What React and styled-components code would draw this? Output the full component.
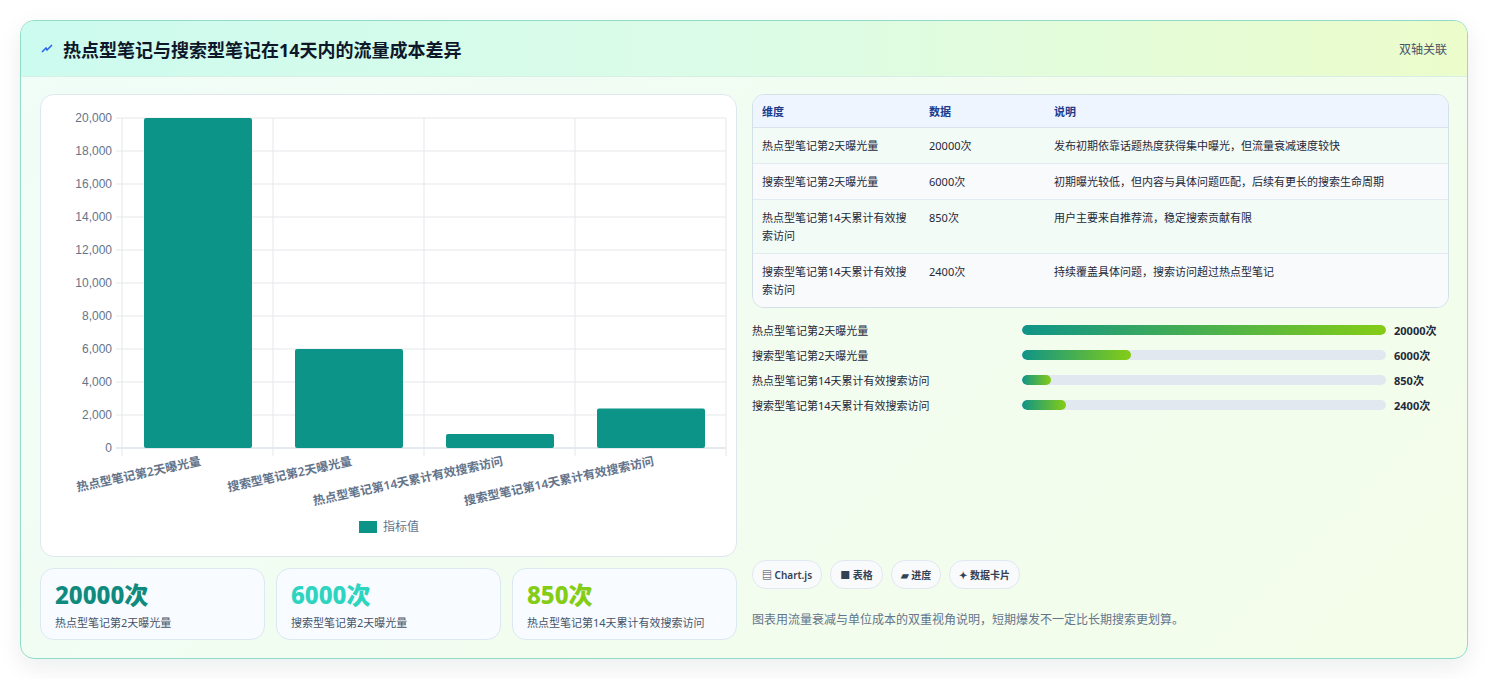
import React from "react";
import styled, { createGlobalStyle } from "styled-components";

const Global = createGlobalStyle`
  body { margin: 0; background: #fff; font-family: "Noto Sans", "Noto Sans CJK SC", sans-serif; }
`;

const Page = styled.div`
  padding: 20px 21px 22px 20px;
`;

const Card = styled.section`
  border: 1px solid #8fdcc8;
  border-radius: 14px;
  background: linear-gradient(135deg, #f0fdf8 0%, #f4fde9 100%);
  box-shadow: 0 8px 24px rgba(15, 23, 42, 0.08);
  overflow: hidden;
`;

const Header = styled.header`
  height: 55px;
  display: flex;
  align-items: center;
  justify-content: space-between;
  padding: 0 20px;
  background: linear-gradient(90deg, #ccfbef 0%, #dcfce7 50%, #ecfccb 100%);
  border-bottom: 1px solid #d9efe6;
`;

const Title = styled.h1`
  margin: 0;
  font-size: 18px;
  font-weight: 700;
  color: #0f172a;
  display: flex;
  align-items: center;
  gap: 10px;
`;

const Tag = styled.span`
  font-size: 12px;
  color: #475569;
`;

const Body = styled.div`
  display: grid;
  grid-template-columns: 697px 697px;
  gap: 15px;
  padding: 17px 18px 18px 19px;
`;

const Col = styled.div`
  display: flex;
  flex-direction: column;
  gap: 11px;
`;

const Panel = styled.div`
  background: #fff;
  border: 1px solid #dfe7ee;
  border-radius: 14px;
  height: 461px;
`;

const Stats = styled.div`
  display: grid;
  grid-template-columns: repeat(3, 1fr);
  gap: 11px;
`;

const Stat = styled.div`
  height: 72px;
  box-sizing: border-box;
  border: 1px solid #dbe9f0;
  border-radius: 14px;
  background: #f8fbff;
  padding: 10px 14px;
`;

const StatValue = styled.div`
  font-size: 24px;
  font-weight: 800;
  line-height: 32px;
  color: ${(p) => p.color};
`;

const StatLabel = styled.div`
  font-size: 11px;
  color: #475569;
  margin-top: 3px;
`;

const Table = styled.table`
  width: 100%;
  border-collapse: separate;
  border-spacing: 0;
  border: 1px solid #d3dfe9;
  border-radius: 12px;
  overflow: hidden;
  font-size: 11px;
  color: #1e293b;
  th {
    text-align: left;
    font-weight: 600;
    color: #1e3a8a;
    background: #eef5ff;
    height: 32px;
    padding: 0 9px;
    border-bottom: 1px solid #d8e3ee;
  }
  td {
    padding: 9px 9px 8px;
    line-height: 18px;
    vertical-align: top;
    border-bottom: 1px solid #e3ebf2;
  }
  tr:nth-child(odd) td { background: #f2fbf6; }
  tr:nth-child(even) td { background: #f8fafc; }
  tr:last-child td { border-bottom: none; }
`;

const Bars = styled.div`
  display: flex;
  flex-direction: column;
  gap: 8px;
  margin-top: 2px;
`;

const BarRow = styled.div`
  display: grid;
  grid-template-columns: 262px 364px 1fr;
  align-items: center;
  gap: 8px;
  font-size: 11px;
  color: #1e293b;
  height: 17px;
  b { font-weight: 700; }
`;

const Track = styled.div`
  height: 10px;
  border-radius: 5px;
  background: #e2e8f0;
  overflow: hidden;
`;

const Fill = styled.div`
  height: 100%;
  border-radius: 5px;
  background: linear-gradient(90deg, #0f9488, #84cc16);
`;

const Spacer = styled.div`
  flex: 1;
`;

const Chips = styled.div`
  display: flex;
  gap: 8px;
`;

const Chip = styled.span`
  font-size: 10px;
  font-weight: 600;
  color: #334155;
  background: #f8fafc;
  border: 1px solid #e2e8f0;
  border-radius: 14px;
  padding: 6px 9px;
`;

const Note = styled.p`
  margin: 10px 0 12px;
  font-size: 12px;
  color: #64748b;
`;

const rows = [
  ["热点型笔记第2天曝光量", 20000, "发布初期依靠话题热度获得集中曝光，但流量衰减速度较快"],
  ["搜索型笔记第2天曝光量", 6000, "初期曝光较低，但内容与具体问题匹配，后续有更长的搜索生命周期"],
  ["热点型笔记第14天累计有效搜索访问", 850, "用户主要来自推荐流，稳定搜索贡献有限"],
  ["搜索型笔记第14天累计有效搜索访问", 2400, "持续覆盖具体问题，搜索访问超过热点型笔记"],
];

const Chart = () => {
  const top = 23, bottom = 353, left = 81, right = 685;
  const ticks = [0, 2000, 4000, 6000, 8000, 10000, 12000, 14000, 16000, 18000, 20000];
  const y = (v) => bottom - (v / 20000) * (bottom - top);
  const step = (right - left) / 4;
  return (
    <svg width="697" height="461" viewBox="0 0 697 461" style={{ display: "block" }}>
      {ticks.map((t) => (
        <g key={t}>
          <line x1={left - 6} x2={right} y1={y(t)} y2={y(t)} stroke={t === 0 ? "#cbd5e1" : "#e5e7eb"} />
          <text x={left - 10} y={y(t) + 4} textAnchor="end" fontSize="12" fill="#64748b" fontFamily="Liberation Sans, sans-serif">
            {t.toLocaleString("en-US")}
          </text>
        </g>
      ))}
      {[0, 1, 2, 3, 4].map((i) => (
        <line key={i} x1={left + i * step} x2={left + i * step} y1={top} y2={bottom + 8} stroke="#e5e7eb" />
      ))}
      {rows.map((r, i) => {
        const x = left + i * step + 22;
        return (
          <g key={i}>
            <rect x={x} y={y(r[1])} width={108} height={bottom - y(r[1])} rx="2" fill="#0d9488" />
            <text
              transform={`translate(${left + i * step + step / 2 + 4}, ${370}) rotate(-12)`}
              textAnchor="end"
              fontSize="12"
              fontWeight="600"
              fill="#64748b"
            >
              {r[0]}
            </text>
          </g>
        );
      })}
      <rect x="318" y="426" width="18" height="12" fill="#0d9488" />
      <text x="342" y="436" fontSize="12" fill="#64748b">指标值</text>
    </svg>
  );
};

export default function App() {
  return (
    <Page>
      <Global />
      <Card>
        <Header>
          <Title>
            <svg width="12" height="10" viewBox="0 0 12 10">
              <path d="M1 8 L5 4 L6 6 L11 1" stroke="#2563eb" strokeWidth="1.5" fill="none" />
            </svg>
            热点型笔记与搜索型笔记在14天内的流量成本差异
          </Title>
          <Tag>双轴关联</Tag>
        </Header>
        <Body>
          <Col>
            <Panel>
              <Chart />
            </Panel>
            <Stats>
              <Stat>
                <StatValue color="#0f8a7e">20000次</StatValue>
                <StatLabel>热点型笔记第2天曝光量</StatLabel>
              </Stat>
              <Stat>
                <StatValue color="#2dd4bf">6000次</StatValue>
                <StatLabel>搜索型笔记第2天曝光量</StatLabel>
              </Stat>
              <Stat>
                <StatValue color="#84cc16">850次</StatValue>
                <StatLabel>热点型笔记第14天累计有效搜索访问</StatLabel>
              </Stat>
            </Stats>
          </Col>
          <Col>
            <Table>
              <colgroup>
                <col style={{ width: 167 }} />
                <col style={{ width: 125 }} />
                <col />
              </colgroup>
              <thead>
                <tr>
                  <th>维度</th>
                  <th>数据</th>
                  <th>说明</th>
                </tr>
              </thead>
              <tbody>
                {rows.map((r) => (
                  <tr key={r[0]}>
                    <td>{r[0]}</td>
                    <td>{r[1]}次</td>
                    <td>{r[2]}</td>
                  </tr>
                ))}
              </tbody>
            </Table>
            <Bars>
              {rows.map((r) => (
                <BarRow key={r[0]}>
                  <span>{r[0]}</span>
                  <Track>
                    <Fill style={{ width: `${Math.max((r[1] / 20000) * 100, 8)}%` }} />
                  </Track>
                  <b>{r[1]}次</b>
                </BarRow>
              ))}
            </Bars>
            <Spacer />
            <Chips>
              <Chip>▤ Chart.js</Chip>
              <Chip>■ 表格</Chip>
              <Chip>▰ 进度</Chip>
              <Chip>✦ 数据卡片</Chip>
            </Chips>
            <Note>图表用流量衰减与单位成本的双重视角说明，短期爆发不一定比长期搜索更划算。</Note>
          </Col>
        </Body>
      </Card>
    </Page>
  );
}
